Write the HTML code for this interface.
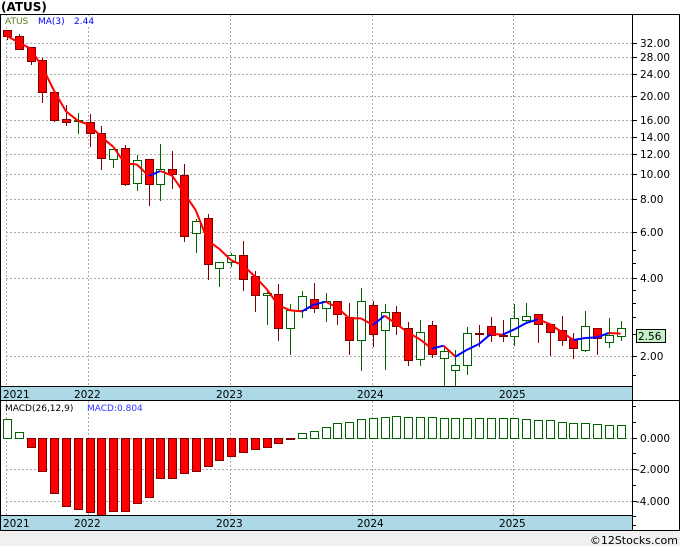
<!DOCTYPE html>
<html><head><meta charset="utf-8">
<style>
html,body{margin:0;padding:0;background:#fff;}
body{width:680px;height:546px;overflow:hidden;font-family:"DejaVu Sans",sans-serif;}
</style></head>
<body>
<svg id="s" width="680" height="546" xmlns="http://www.w3.org/2000/svg" style="display:block">
</svg>
<script>
var s=document.getElementById('s');var h='';
function R(x,y,w,hh,f,st){h+='<rect x="'+x+'" y="'+y+'" width="'+w+'" height="'+hh+'" fill="'+f+'"'+(st?' stroke="'+st+'" stroke-width="1"':'')+'/>';}
function L(x1,y1,x2,y2,c,w,d){h+='<line x1="'+x1+'" y1="'+y1+'" x2="'+x2+'" y2="'+y2+'" stroke="'+c+'" stroke-width="'+(w||1)+'"'+(d?' stroke-dasharray="'+d+'"':'')+'/>';}
function T(x,y,t,sz,c,a,fw,ff){h+='<text x="'+x+'" y="'+y+'" font-size="'+sz+'" fill="'+c+'" font-family="'+(ff||'DejaVu Sans, sans-serif')+'"'+(a?' text-anchor="'+a+'"':'')+(fw?' font-weight="'+fw+'"':'')+'>'+t+'</text>';}
R(0,531,680,15,'#f0f0f0');
T(678,544,'©12Stocks.com',11,'#000','end');
T(1,11,'(ATUS)',12,'#000',null,'bold');
L(0,14.5,680,14.5,'#000',1);
R(0,387,632,14,'#add8e6');R(0,516,632,14,'#add8e6');
var pl=[[43,'32.00'],[57,'28.00'],[74,'24.00'],[96,'20.00'],[120,'16.00'],[137,'14.00'],[154,'12.00'],[174,'10.00'],[199,'8.00'],[232,'6.00'],[278,'4.00'],[356,'2.00']];
pl.forEach(function(p){L(6,p[0]+.5,632,p[0]+.5,'#aaa',1,'2,2');L(632,p[0]+.5,637,p[0]+.5,'#000');T(640,p[0]+4,p[1],10.5,'#000');});
[250,263,290,303,317,334,375].forEach(function(y){L(632,y+.5,636,y+.5,'#000');});
[6,88,230,372,513].forEach(function(x){L(x+.5,15,x+.5,387,'#aaa',1,'2,2');L(x+.5,401,x+.5,516,'#aaa',1,'2,2');});
[[438,'0.000'],[469,'-2.000'],[501,'-4.000']].forEach(function(p){L(6,p[0]+.5,632,p[0]+.5,'#aaa',1,'2,2');L(632,p[0]+.5,637,p[0]+.5,'#000');T(p[1].charAt(0)=='-'?636:640,p[0]+4,p[1],10.5,'#000');});
[406,422,453,485,516,525].forEach(function(y){L(632,y+.5,636,y+.5,'#000');});
var c=[[30,36,30,40,'r'],[36,49,34,49,'r'],[47,61,47,65,'r'],[60,92,58,103,'r'],[92,120,92,122,'r'],[119,122,105,126,'r'],[120,121,113,134,'g'],[122,133,114,147,'r'],[133,158,126,170,'r'],[149,159,149,168,'g'],[148,184,145,186,'r'],[160,183,155,191,'g'],[159,184,159,206,'r'],[169,184,144,201,'g'],[169,174,151,189,'r'],[175,236,164,242,'r'],[221,233,219,253,'g'],[218,264,214,280,'r'],[262,268,262,287,'g'],[255,262,253,267,'g'],[255,279,241,291,'r'],[276,295,271,312,'r'],[293,295,292,325,'g'],[294,328,284,341,'r'],[310,328,304,355,'g'],[296,310,291,318,'g'],[299,308,283,313,'r'],[301,308,293,322,'g'],[301,314,303,325,'r'],[317,340,303,355,'r'],[301,340,288,371,'g'],[305,334,301,347,'r'],[312,330,304,370,'g'],[312,326,306,335,'r'],[328,360,322,366,'r'],[332,359,320,366,'g'],[325,354,321,358,'r'],[351,358,347,386,'g'],[365,370,350,387,'g'],[333,365,327,375,'g'],[333,334,325,347,'r'],[326,335,317,342,'r'],[335,335,320,342,'r'],[318,336,304,346,'g'],[316,320,303,322,'g'],[314,324,314,343,'r'],[324,332,324,356,'r'],[330,340,316,346,'r'],[339,348,333,359,'r'],[326,350,311,352,'g'],[328,338,328,355,'r'],[335,342,318,348,'g'],[328,336,321,341,'g']];
function X(i){return 7+11.8*i;}
var closes=[];
c.forEach(function(k,i){var x=X(i);var cx=Math.round(x)+.5;
 var wc=k[4]=='r'?'#800000':'#006400';
 L(cx,k[2],cx,k[3],wc,1);
 var bh=Math.max(k[1]-k[0],1);
 if(k[4]=='r'){R(Math.round(x)-3.5,k[0]+.5,8,bh,'#ff0000','#800000');closes.push(k[1]);}
 else{R(Math.round(x)-3.5,k[0]+.5,8,bh,'#fff','#006400');closes.push(k[0]);}
});
var ma=[];for(var i=0;i<closes.length;i++){var a=closes.slice(Math.max(0,i-2),i+1);ma.push(a.reduce(function(p,q){return p+q},0)/a.length);}
for(var i=1;i<ma.length;i++){var col=ma[i]<ma[i-1]?'#0000ff':'#ff0000';L(X(i-1),ma[i-1],X(i),ma[i],col,2);}
var m=[[419,'g'],[432,'g'],[447],[471],[493],[506],[509],[512],[515],[511],[511],[503],[497],[478],[478],[473],[471],[466],[460],[456],[452],[449],[447],[443],[439],
[433],[431],[427],[423],[422],[419],[418],[417],[416],[417],[417],[417],[418],[418],[418],[418],[418],[418],[418],[419],[420],[420],[422],[423],[423],[424],[425],[425]];
m.forEach(function(b,i){var x=Math.round(X(i))-3.5;
 if(b[0]<438||b[1]=='g'){R(x,b[0]+.5,8,438-b[0],'#fff','#006400');}
 else if(b[0]-438<2){R(x,438.5,8,1,'#800000','#800000');}
 else R(x,438.5,8,b[0]-438,'#ff0000','#800000');});
[[3,'2021'],[74,'2022'],[216,'2023'],[357,'2024'],[499,'2025']].forEach(function(d){T(d[0],398,d[1],10.5,'#000');T(d[0],527,d[1],10.5,'#000');});
L(0.5,14,0.5,531,'#000',1);L(632.5,14,632.5,531,'#000',1);L(679.5,14,679.5,531,'#000',1);
L(0,386.5,632,386.5,'#000');L(0,400.5,680,400.5,'#000');L(0,515.5,632,515.5,'#000');L(0,530.5,680,530.5,'#000');
R(1,16,100,10,'#fff');
T(5,24,'ATUS',9,'#5a7a1a');T(38,24,'MA(3)',9,'#0000ff');T(74,24,'2.44',9,'#0000ff');
T(5,411,'MACD(26,12,9)',9,'#000');T(87,411,'MACD:0.804',9,'#3333ff');
R(636.5,329.5,29,13,'#c8f0c8','#000');T(638,340,'2.56',10.5,'#000');
s.innerHTML=h;
</script>
</body></html>
